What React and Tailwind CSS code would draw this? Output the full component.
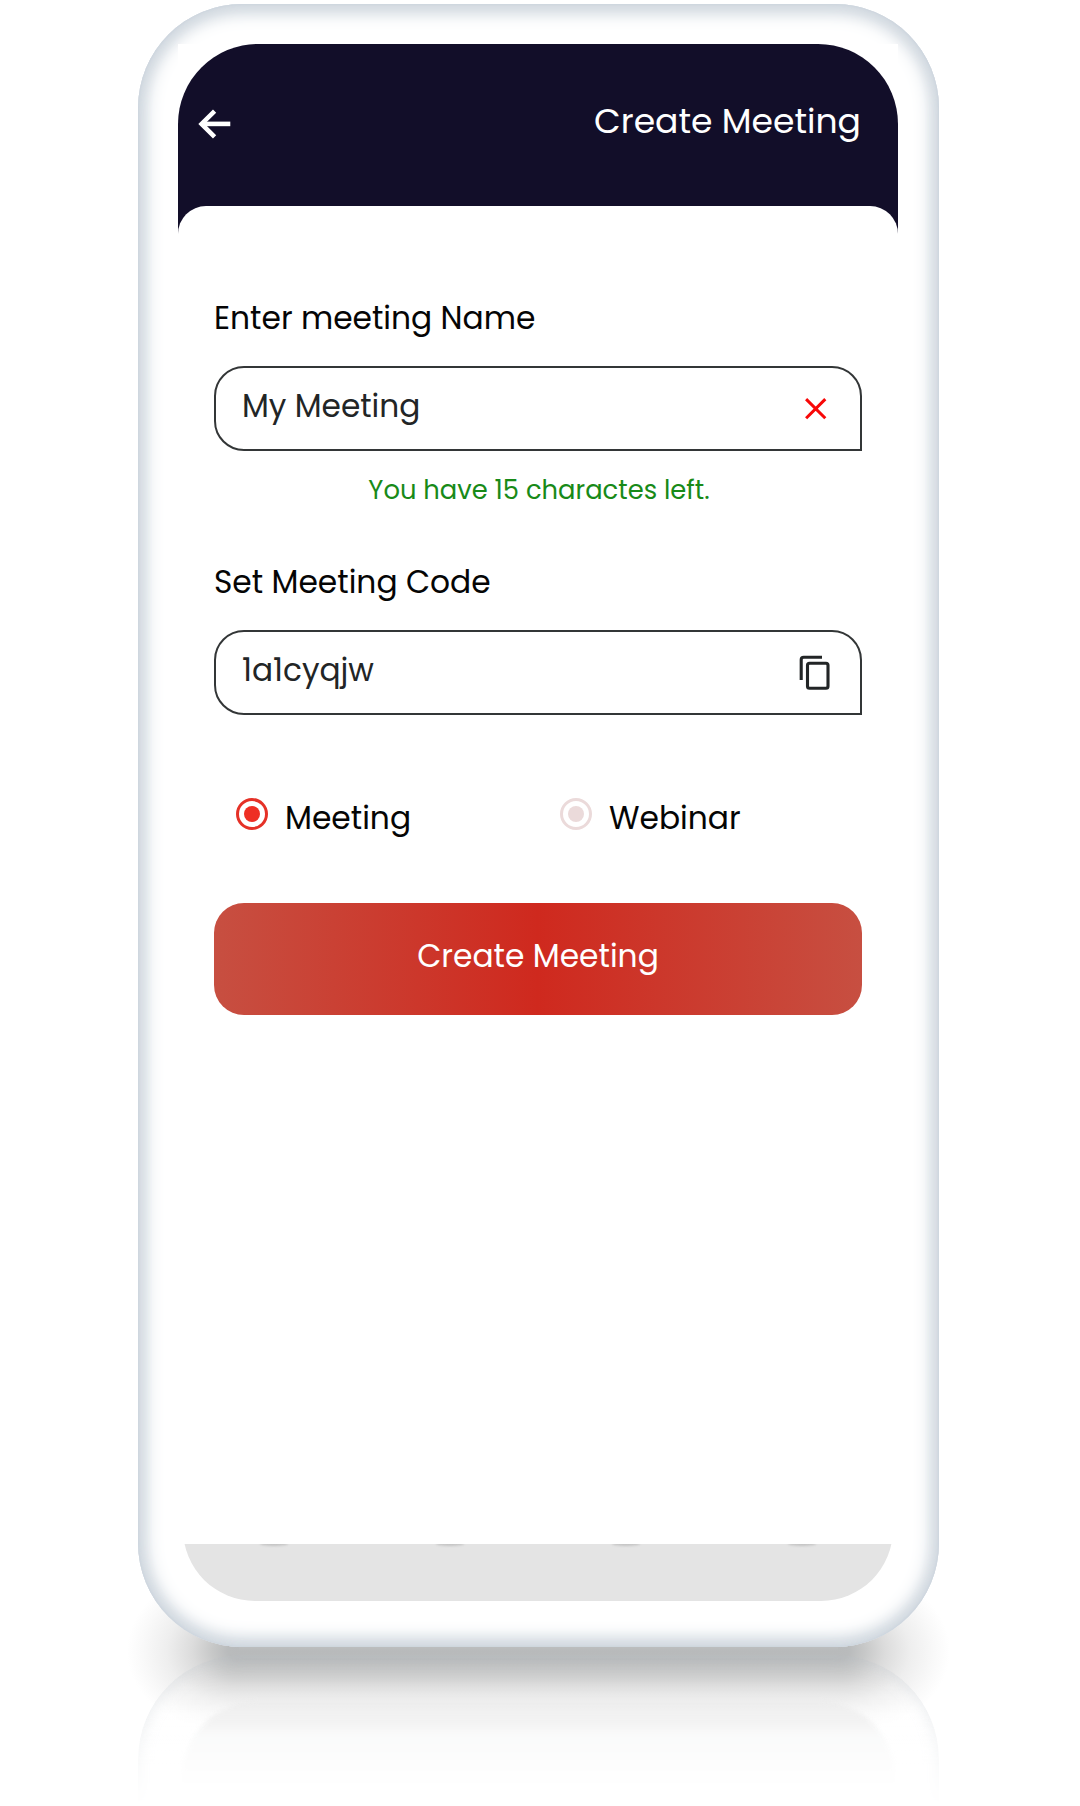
import React from "react";

const fontClass = "font-['Poppins','Inter',sans-serif] [font-feature-settings:'cv11'_1]";

function BackArrow() {
  return (
    <svg className="block h-[30px] w-[33px]" viewBox="0 0 33 30" fill="none" stroke="#fff" strokeWidth="4.6">
      <path d="M32.3 14.9H4" />
      <path d="M16.6 2.2L3.6 14.9L16.6 27.8" />
    </svg>
  );
}

function CloseIcon() {
  return (
    <svg className="block h-6 w-6" viewBox="0 0 24 24" fill="none" stroke="#f80808" strokeWidth="3">
      <path d="M2.1 2.1L21.3 21.3M21.3 2.1L2.1 21.3" />
    </svg>
  );
}

function CopyIcon() {
  return (
    <svg className="block h-9 w-8" viewBox="0 0 32 36" fill="none" stroke="#222526" strokeWidth="3.1">
      <path d="M2.2 25V4.8Q2.2 2.3 4.7 2.3H23" />
      <rect x="8.5" y="8.2" width="20.5" height="25" rx="2" />
    </svg>
  );
}

function Field({ value, icon, pad }) {
  return (
    <div className={`mt-7 flex h-[85px] items-center justify-between rounded-[30px] rounded-br-none border-2 border-[#333637] pl-[26px] ${pad}`}>
      <span className="pb-[5px] text-[31.2px] leading-10 text-[#222526]">{value}</span>
      {icon}
    </div>
  );
}

function Radio({ label, ring, dot }) {
  return (
    <label className="flex h-10 items-center pl-[22px]">
      <span className={`-mt-[5px] flex h-8 w-8 items-center justify-center rounded-full border-[3px] ${ring}`}>
        <span className={`h-4 w-4 rounded-full ${dot}`} />
      </span>
      <span className="ml-[17px] pt-[3px] text-[31.3px] leading-10 text-[#050505]">{label}</span>
    </label>
  );
}

function GroundShadow() {
  return (
    <div className="absolute -left-[11px] top-[1562px] flex h-[170px] w-[823px]">
      <div className="w-[112px] bg-[radial-gradient(112px_85px_at_100%_50%,#b8babb_0%,#b9bbbc_10%,#c7c8c8_24%,#dcdcdc_42%,#eeeeee_64%,#f9f9f9_86%,#fff_100%)]" />
      <div className="flex-1 bg-[linear-gradient(#fff_0%,#b8babb_50%,#b9bbbc_55%,#c7c8c8_62%,#dcdcdc_71%,#eeeeee_82%,#f9f9f9_93%,#fff_100%)]" />
      <div className="w-[112px] bg-[radial-gradient(112px_85px_at_0%_50%,#b8babb_0%,#b9bbbc_10%,#c7c8c8_24%,#dcdcdc_42%,#eeeeee_64%,#f9f9f9_86%,#fff_100%)]" />
    </div>
  );
}

function Reflection() {
  return (
    <div className="absolute left-0 top-[1651px] h-[150px] w-[801px] overflow-hidden rounded-t-[104px] bg-[linear-gradient(rgba(255,255,255,0)_0px,rgba(255,255,255,0.04)_26px,rgba(255,255,255,0.3)_50px,rgba(255,255,255,0.9)_75px,#fff_110px)] shadow-[inset_0_2px_14px_2px_rgba(186,194,202,0.26)] [mask-image:linear-gradient(#000_40%,transparent)]">
      <div className="mx-11 mt-[46px] h-[104px] rounded-t-[76px] bg-[linear-gradient(rgba(232,232,232,0.5)_0px,#f1f1f1_18px,#f8f9f9_34px,#fafafa_60px,#fff_100px)] blur-[2px]" />
    </div>
  );
}

function ScreenFooter() {
  return (
    <div className="mx-[5px] h-[57px] overflow-hidden">
      <div className="-mt-[100px] h-[157px] overflow-hidden rounded-b-[72px] bg-[#e4e4e4] pt-[100px]">
        <div className="flex justify-around px-[3px]">
          {[0, 1, 2, 3].map((i) => (
            <span key={i} className="-mt-[3px] h-[5px] w-7 rounded-[50%] bg-[#c4c4c4] blur-[1px]" />
          ))}
        </div>
      </div>
    </div>
  );
}

export default function App() {
  return (
    <div className={`h-[1806px] w-[1080px] overflow-hidden bg-white pl-[138px] pt-1 font-normal ${fontClass}`}>
      <div className="relative w-[801px]">
        <GroundShadow />
        <Reflection />
        <div className="relative h-[1643px] rounded-[104px] bg-white pl-10 pr-[41px] pt-10 shadow-[inset_0_0_2px_1px_#cdd5de,inset_0_5px_16px_-1px_#d3dae1,inset_0_-5px_16px_-1px_#d3dae1,inset_0_0_20px_6px_#c9d2da]">
          <div className="h-[1500px] bg-white">
            <header className="flex h-[190px] items-start justify-between rounded-t-[80px] bg-[#120e29] pl-5 pr-[37px]">
              <div className="mt-[65px]">
                <BackArrow />
              </div>
              <h1 className="mt-[55px] text-[34.6px] leading-[44px] text-white">Create Meeting</h1>
            </header>
            <div className="-mt-[28px] h-[28px] rounded-t-[28px] bg-white" />
            <main className="px-9 pt-16">
              <h2 className="text-[31.3px] leading-10 text-[#050505]">Enter meeting Name</h2>
              <Field value="My Meeting" icon={<CloseIcon />} pad="pr-[32px]" />
              <p className="mt-[23px] pl-0.5 text-center text-[25.8px] leading-8 text-[#188a18]">You have 15 charactes left.</p>
              <h2 className="mt-14 text-[31.3px] leading-10 text-[#050505]">Set Meeting Code</h2>
              <Field value="1a1cyqjw" icon={<CopyIcon />} pad="pr-[29px]" />
              <div className="mt-[81px] grid grid-cols-2">
                <Radio label="Meeting" ring="border-[#e53127]" dot="bg-[#ee2f24]" />
                <Radio label="Webinar" ring="border-[#ebdada]" dot="bg-[#ebdada]" />
              </div>
              <button className="mt-[67px] block h-28 w-full rounded-[30px] bg-[linear-gradient(to_right,#c74f41,#cf291e_50%,#c74f41)] pb-1.5 text-[31.3px] leading-10 text-white">
                Create Meeting
              </button>
            </main>
          </div>
          <ScreenFooter />
        </div>
      </div>
    </div>
  );
}
